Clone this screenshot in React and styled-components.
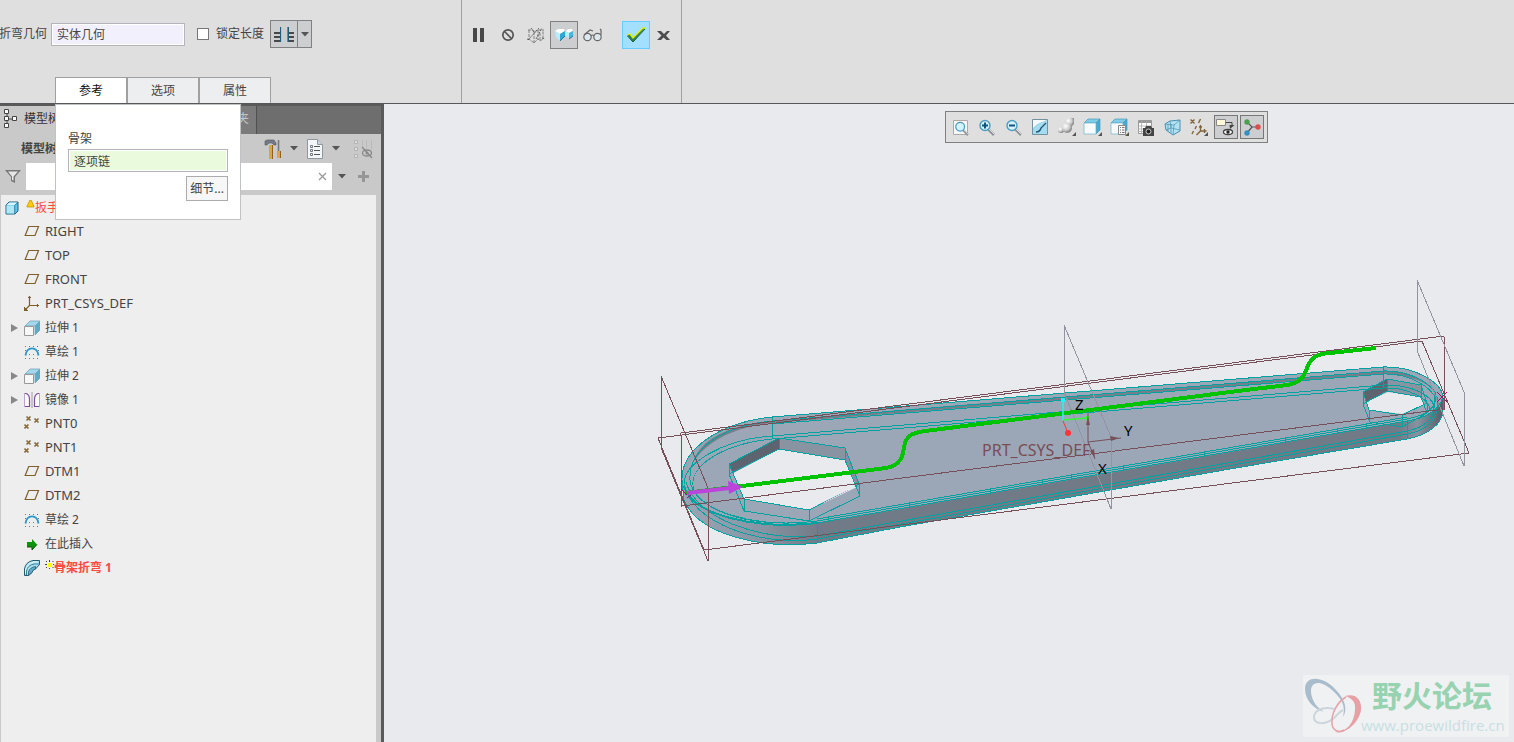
import React from 'react';
import styled, { createGlobalStyle, css } from 'styled-components';

const GlobalStyle = createGlobalStyle`
  *, *::before, *::after {
    box-sizing: border-box;
  }

  body {
    margin: 0;
    overflow-x: hidden;
    font-family: 'Noto Sans', 'Noto Sans CJK SC', sans-serif;
    font-size: 12px;
    line-height: 16px;
    color: #444;
    background: #e9eaee;
  }

  button, input {
    font: inherit;
    color: inherit;
    margin: 0;
    padding: 0;
  }

  svg {
    display: block;
    flex: none;
  }
`;

const Page = styled.div`
  display: flex;
  flex-direction: column;
  min-height: 100vh;
`;

/* ---------- ribbon ---------- */

const Ribbon = styled.header`
  display: flex;
  min-height: 104px;
  background: #dfdfdf;
  border-bottom: 1px solid #58585c;
`;

const Settings = styled.section`
  display: flex;
  flex-direction: column;
  justify-content: space-between;
  width: 462px;
  padding-top: 20px;
  border-right: 1px solid #a0a0a0;
`;

const SettingsRow = styled.div`
  display: flex;
  align-items: center;
`;

const FieldLabel = styled.label`
  white-space: nowrap;
`;

const Collector = styled.input`
  width: ${(props) => props.$width};
  height: 23px;
  padding: 0 5px;
  border: 1px solid #b4b4ba;
  background: ${(props) => props.$fill};
  box-shadow: inset 0 0 0 1px #fff;
  outline: none;
`;

const GeometryField = styled.div`
  display: flex;
  align-items: center;
  gap: 4px;
  margin-left: -1px;
`;

const CheckField = styled.div`
  display: flex;
  align-items: center;
  gap: 7px;
  margin: 0 6px 0 12px;
`;

const Check = styled.input`
  appearance: none;
  width: 12px;
  height: 12px;
  border: 1px solid #777;
  background: #fff;

  &:checked {
    background: #777;
  }
`;

const SplitButton = styled.div`
  display: flex;
  height: 28px;
  border: 1px solid #808080;
  background: #cdced0;
`;

const SplitPart = styled.button`
  display: flex;
  align-items: center;
  justify-content: center;
  width: ${(props) => (props.$narrow ? '14px' : '26px')};
  border: 0;
  border-left: ${(props) => (props.$narrow ? '1px solid #808080' : '0')};
  background: none;
`;

const TabBar = styled.nav`
  position: relative;
  display: flex;
  margin-left: 55px;
`;

const RibbonTab = styled.button`
  width: 72px;
  height: 26px;
  border: 1px solid #a0a0a0;
  border-bottom: 0;
  background: ${(props) => (props.$active ? '#fff' : '#edeef0')};
  color: ${(props) => (props.$active ? '#111' : '#444')};
`;

const Popup = styled.div`
  position: absolute;
  z-index: 2;
  top: 100%;
  left: 0;
  display: flex;
  flex-direction: column;
  align-items: flex-start;
  width: 186px;
  margin-top: 1px;
  padding: 26px 12px 18px;
  border: 1px solid #c0c3c6;
  background: #fff;
`;

const PopupLabel = styled.label`
  margin-bottom: 2px;
`;

const DetailsButton = styled.button`
  align-self: flex-end;
  height: 25px;
  margin-top: 4px;
  padding: 0 3px;
  border: 1px solid #acacac;
  background: #f7f7f7;
`;

const Controls = styled.section`
  display: flex;
  align-items: flex-start;
  width: 220px;
  padding: 21px 0 0 4px;
  border-right: 1px solid #a0a0a0;
`;

const ControlGroup = styled.div`
  display: flex;
  margin-right: 16px;
`;

const ControlButton = styled.button`
  display: flex;
  align-items: center;
  justify-content: center;
  width: 28px;
  height: 28px;
  border: 1px solid transparent;
  background: none;

  ${(props) => props.$pressed && css`
    border-color: #808080;
    background: #cdced0;
  `}

  ${(props) => props.$accept && css`
    border-color: #66ccff;
    background: #a3dfff;
  `}
`;

/* ---------- navigator ---------- */

const Workspace = styled.div`
  display: flex;
  flex: 1;
`;

const Navigator = styled.aside`
  display: flex;
  flex-direction: column;
  width: 384px;
  padding-top: 2px;
  border-right: 3px solid #5a5a5a;
  background: linear-gradient(#5a5a5a 2px, #c9c9c9 2px);
`;

const NavTabs = styled.div`
  display: flex;
  height: 28px;
  background: #6e6e6e;
`;

const NavTab = styled.button`
  display: flex;
  align-items: center;
  justify-content: ${(props) => (props.$active ? 'flex-start' : 'flex-end')};
  gap: 6px;
  width: ${(props) => (props.$active ? '110px' : '147px')};
  padding: 0 7px 2px 4px;
  border: 0;
  border-right: 1px solid #505050;
  background: ${(props) => (props.$active ? '#c9c9c9' : '#7b7b7b')};
  color: ${(props) => (props.$active ? '#333' : '#c4c4c4')};
`;

const NavTitle = styled.div`
  display: flex;
  align-items: center;
  height: 29px;
  padding: 0 7px 0 21px;
`;

const NavHeading = styled.h2`
  flex: 1;
  margin: 0;
  font-size: 12px;
  font-weight: 600;
`;

const NavTools = styled.div`
  display: flex;
  margin-right: 6px;
`;

const IconButton = styled.button`
  display: flex;
  align-items: center;
  justify-content: center;
  width: ${(props) => (props.$small ? '20px' : '22px')};
  height: 22px;
  border: 0;
  background: none;
`;

const FilterRow = styled.div`
  display: flex;
  align-items: center;
  height: 27px;
  margin-bottom: 5px;
  padding: 0 7px 0 5px;
`;

const FilterBox = styled.div`
  display: flex;
  align-items: center;
  flex: 1;
  height: 27px;
  margin-left: 5px;
  background: #fff;
`;

const FilterInput = styled.input`
  flex: 1;
  min-width: 0;
  height: 27px;
  padding: 0 6px;
  border: 0;
  background: none;
  outline: none;
`;

const Tree = styled.ul`
  flex: 1;
  margin: 0 5px 0 1px;
  padding: 0;
  list-style: none;
  background: #eee;
`;

const TreeRow = styled.li`
  display: flex;
  align-items: center;
  height: 24px;
  padding-top: ${(props) => (props.$latin ? '0' : '2px')};
  padding-left: ${(props) => (props.$root ? '4px' : '9px')};
  white-space: nowrap;
`;

const Expander = styled.span`
  display: flex;
  width: 14px;
`;

const TreeIcon = styled.span`
  display: flex;
  width: ${(props) => (props.$root ? '21px' : '21px')};
`;

const TreeLabel = styled.span`
  font-size: ${(props) => (props.$latin ? '13px' : '12px')};
  font-weight: ${(props) => (props.$bold ? 700 : 400)};
  color: ${(props) => (props.$failed ? '#ff4a40' : '#444')};
`;

/* ---------- graphics area ---------- */

const Graphics = styled.main`
  position: relative;
  flex: 1;
  min-width: 0;
  background: #e9eaee;
`;

const Scene = styled.svg`
  width: 100%;
  height: auto;
`;

const SceneText = styled.text`
  font-family: 'Noto Sans', sans-serif;
  font-size: ${(props) => (props.$axis ? '15px' : '16px')};
  fill: ${(props) => (props.$axis ? '#000' : '#7a4c54')};
`;

const ViewToolbar = styled.div`
  position: absolute;
  top: 7px;
  right: 246px;
  display: flex;
  align-items: center;
  justify-content: space-between;
  width: 323px;
  height: 32px;
  padding: 0 3px;
  border: 1px solid #808080;
  background: #dfdfdf;
`;

const ViewButton = styled.button`
  display: flex;
  align-items: center;
  justify-content: center;
  width: 24px;
  height: 24px;
  border: 1px solid ${(props) => (props.$pressed ? '#777' : 'transparent')};
  background: ${(props) => (props.$pressed ? '#cdced0' : 'none')};
`;

const Watermark = styled.div`
  position: absolute;
  right: 5px;
  bottom: 5px;
  display: flex;
  width: 206px;
  height: 62px;
  background: #f0f1f3;
`;

const WatermarkText = styled.div`
  display: flex;
  flex-direction: column;
  gap: 2px;
  margin-left: -4px;
`;

const WatermarkName = styled.span`
  padding-left: 11px;
  font-family: 'Noto Sans CJK SC', sans-serif;
  font-size: 30px;
  font-weight: 700;
  line-height: 38px;
  color: #97d3b0;
`;

const WatermarkUrl = styled.span`
  font-family: 'Open Sans', sans-serif;
  font-size: 15px;
  line-height: 20px;
  color: #c6e0e2;
`;

/* ---------- icons ---------- */

const Icon = ({ size = 16, width, height, children }) => (
  <svg width={width || size} height={height || size} viewBox={`0 0 ${width || size} ${height || size}`} fill="none" aria-hidden="true">
    {children}
  </svg>
);

const Caret = () => (
  <Icon width={8} height={5}>
    <path d="M0 0h8L4 4.6z" fill="#555" />
  </Icon>
);

const LengthIcon = () => (
  <Icon width={20} height={18}>
    <path d="M7.500 2v15" stroke="#86d4f5" strokeWidth="1" />
    <path d="M6.500 2v15" stroke="#1f5d7c" />
    <path d="M14.500 2v15" stroke="#1f5d7c" strokeWidth="1" />
    <path d="M13.500 2v15" stroke="#2f9fd0" />
    <path d="M0 8h6M0 12h6M0 16h6M15 8h5M15 12h5M15 16h5" stroke="#484848" strokeWidth="2" />
  </Icon>
);

const PauseIcon = () => (
  <Icon>
    <path d="M1 1h4v14H1zM8 1h4v14H8z" fill="#484848" />
  </Icon>
);

const BlockedIcon = () => (
  <Icon>
    <circle cx="8" cy="8" r="5.200" stroke="#555" strokeWidth="1.700" />
    <path d="M4.300 4.300l7.400 7.400" stroke="#555" strokeWidth="1.600" />
  </Icon>
);

const WireIcon = () => (
  <Icon width={20} height={18}>
    <path d="M2 4h5l1 2 4-2h6M3 4v9l5 4 4-4 2 2 3-2V4M8 6v11M12 4v9M14 7v8" stroke="#777" strokeWidth="0.900" strokeDasharray="3 1" />
    <path d="M2 14L13 2M5 2l3 4M10 13l6-11M16 12l3 1M1 13l3 1" stroke="#555" strokeWidth="0.900" strokeDasharray="2 1" />
  </Icon>
);

const PreviewIcon = () => (
  <Icon width={18} height={14}>
    <path d="M0 3l3-2h6l1 2-5 3zM11 3l2-2h4l1 2-4 2z" fill="#fff" />
    <path d="M0 3l5 3v7L1 9z" fill="#b9ebfb" />
    <path d="M5 6l5-3v5l-5 5z" fill="#2ba7d9" />
    <path d="M10 3l4 2v6l-3-3z" fill="#b9ebfb" />
    <path d="M14 5l4-2v5l-4 3z" fill="#42b8e3" />
    <path d="M5 13l5-5M14 11l4-3" stroke="#27779c" />
  </Icon>
);

const GlassesIcon = () => (
  <Icon width={20} height={14}>
    <circle cx="5.500" cy="9" r="3.700" fill="#dce8f0" stroke="#666" strokeWidth="1.200" />
    <circle cx="15.500" cy="9" r="3.700" fill="#dce8f0" stroke="#666" strokeWidth="1.200" />
    <path d="M9 8q1.500-2 3 0M2 7l6-5 3 1M19 7V2l-1-1" stroke="#666" strokeWidth="1.200" />
  </Icon>
);

const AcceptIcon = () => (
  <Icon width={20} height={16}>
    <path d="M1 8l3-1 3 4L17 1h2L7 15z" fill="#2c8455" />
    <path d="M1 8l3-1 3 4L17 1h2" stroke="#e2ec00" strokeWidth="1.300" />
    <path d="M1.500 9L7 15 19 2" stroke="#195c3a" />
  </Icon>
);

const CancelIcon = () => (
  <Icon width={14} height={12}>
    <path d="M0 2h4l3 3 3-3h3L9 6.500l4 4.500H9.500L6.500 8.500 4 11H0l4.500-4.500z" fill="#4c4c4c" />
  </Icon>
);

const ModelTreeIcon = () => (
  <Icon width={14} height={20}>
    <path d="M3 4v12M3 10h8" stroke="#444" strokeWidth="1" />
    <path d="M.5.5h4v4h-4zM.5 7.500h4v4h-4zM.5 14.500h4v4h-4zM8.500 7.500h4v4h-4z" fill="#fff" stroke="#444" />
  </Icon>
);

const ToolsIcon = () => (
  <Icon width={18} height={20}>
    <path d="M1 2l2-1h7l2 3v2h-2L8 4H5L3 6H1z" fill="#747a86" stroke="#555" strokeWidth="0.600" />
    <path d="M5 6h4v14H5z" fill="#dea347" />
    <path d="M8 6h1v14H8z" fill="#8c6021" />
    <path d="M14.500 1v11" stroke="#777" strokeWidth="1.600" />
    <path d="M13 12h4v7h-4z" fill="#dea347" />
    <path d="M16 12h1v7h-1z" fill="#8c6021" />
  </Icon>
);

const ListIcon = () => (
  <Icon width={16} height={20}>
    <path d="M.5.5h10l5 5v14H.5z" fill="#f3f7f9" stroke="#8f979d" />
    <path d="M10.500.5v5h5" fill="#cad4da" stroke="#8f979d" />
    <path d="M7 7.500h6M7 11.500h6M7 15.500h6" stroke="#555" />
    <path d="M3.500 6.500h2v2h-2zM3.500 10.500h2v2h-2zM3.500 14.500h2v2h-2z" stroke="#777" />
  </Icon>
);

const HiddenTreeIcon = () => (
  <Icon width={20} height={20}>
    <path d="M1.500 1.500h3v3h-3zM1.500 8.500h3v3h-3zM1.500 15.500h3v3h-3z" fill="#ddd" stroke="#b2b2b2" />
    <path d="M9.500 1v8M13.500 1v8M18.500 1v10" stroke="#bbb" />
    <ellipse cx="14" cy="14" rx="4.500" ry="3" stroke="#888" strokeWidth="1.300" />
    <circle cx="14" cy="14" r="1.500" fill="#888" />
    <path d="M9 8l10 11" stroke="#888" strokeWidth="1.300" />
  </Icon>
);

const FilterIcon = () => (
  <Icon>
    <path d="M0 1h16L10 8v6l-4-2V8z" fill="#777" />
    <path d="M3 2.500h10L8.500 7.500v4L7 11V7.500z" fill="#e6e6e6" />
  </Icon>
);

const ClearIcon = () => (
  <Icon size={9}>
    <path d="M1 1l7 7M8 1L1 8" stroke="#999" strokeWidth="1.300" />
  </Icon>
);

const PlusIcon = () => (
  <Icon size={11}>
    <path d="M4 0h3v4h4v3H7v4H4V7H0V4h4z" fill="#969696" />
  </Icon>
);

const PartIcon = () => (
  <Icon width={14} height={14}>
    <path d="M1 4l3-3h9v9l-3 3H1z" fill="#5cc3ea" stroke="#26607a" />
    <path d="M1.500 4.500h8v8h-8z" fill="#aee7fa" />
    <path d="M1.500 4l3-2.500h8L9.500 4z" fill="#d8f5ff" />
    <path d="M9.700 4.500v8M9.700 4.500l3-3" stroke="#26607a" strokeWidth="0.700" />
  </Icon>
);

const WarningIcon = () => (
  <Icon width={9} height={16}>
    <path d="M4 0h1l3 6v1H1V6z" fill="#ffce00" stroke="#b78a00" strokeWidth="0.700" />
  </Icon>
);

const PlaneIcon = () => (
  <Icon>
    <path d="M4.700 3.500h9.800l-3.500 9H1.200z" stroke="#7d5f2c" strokeWidth="1.200" />
  </Icon>
);

const CsysIcon = () => (
  <Icon>
    <path d="M5.500 1v9.500H15M5.500 10.500L1 15" stroke="#7d5f2c" strokeWidth="1.200" />
    <path d="M4 2.500h3M13.500 9v3M0 12v4h4z" stroke="#7d5f2c" />
    <path d="M0 12v4h4z" fill="#7d5f2c" />
  </Icon>
);

const ExtrudeIcon = () => (
  <Icon>
    <path d="M1 6l5-5h10l-5 5z" fill="#a5d7ec" stroke="#71a7bd" strokeWidth="0.800" />
    <path d="M11 6l5-5v9l-5 5z" fill="#5cabc9" stroke="#71a7bd" strokeWidth="0.800" />
    <path d="M.5 6.500h9v9h-9z" fill="#f7f7f7" stroke="#999" />
  </Icon>
);

const SketchIcon = () => (
  <Icon>
    <path d="M1 2.500h14M1 14.500h14M1 6.500h1M14 6.500h1M5 10.500h1M9 10.500h1" stroke="#777" strokeDasharray="1 3" />
    <path d="M1.500 11.500C3 2 13 2 14.500 11.500" stroke="#2c98c6" strokeWidth="1.800" />
  </Icon>
);

const MirrorIcon = () => (
  <Icon>
    <path d="M.5 1.500h1q4 1.500 4 6v7h-5zM15.500 1.500h-1q-4 1.500-4 6v7h5z" fill="#fbfbfb" />
    <path d="M.5 1v14M15.500 1v14" stroke="#b9a3c9" />
    <path d="M1 1.500h1q3.500 1 3.500 6v7H1M15 1.500h-1q-3.500 1-3.500 6v7H15" stroke="#7d4f9d" strokeWidth="1.200" />
    <path d="M8 0v16" stroke="#888" strokeWidth="0.800" />
  </Icon>
);

const PointsIcon = () => (
  <Icon>
    <path d="M2.500 1.500l4 4M6.500 1.500l-4 4M10.500 3.500l4 4M14.500 3.500l-4 4M.5 9.500l4 4M4.500 9.500l-4 4" stroke="#84693b" strokeWidth="1.600" />
  </Icon>
);

const InsertIcon = () => (
  <Icon>
    <path d="M3 6h5V3l5 5.500L8 14v-3H3z" fill="#0c950c" />
    <path d="M3 11h5v3l5-5.500" stroke="#124f12" />
  </Icon>
);

const BendIcon = () => (
  <Icon>
    <path d="M.5 15.500V9Q1.500 2 9 .5h6.500v4L11.500 9q-3 0-3.500 3.500l-3.500 3z" fill="#a9dff0" stroke="#245b70" />
    <path d="M4.500 15.500V12q1-4.500 7-5.500V9q-3 .5-3.500 3.500z" fill="#5cb0cd" stroke="#245b70" strokeWidth="0.800" />
    <path d="M2.500 15v-4q1-6 8-7h5" stroke="#2e7690" strokeWidth="0.900" />
    <path d="M1.500 13v-3q1.500-6 8-8h4" stroke="#e4f8fd" />
  </Icon>
);

const NewMark = () => (
  <Icon width={9} height={16}>
    <path d="M3 3h4v4H3z" fill="#ffff00" />
    <path d="M4.500 0v2M4.500 8v1M0 4.500h2M8 4.500h1M1.500 1v1M8 1v1M1.500 7v1M8 7v1" stroke="#444" />
  </Icon>
);

const Lens = ({ sign }) => (
  <>
    <path d="M10 10l6 6" stroke="#8c9297" strokeWidth="2.600" />
    <path d="M10.500 9.500l6 6" stroke="#ddd" />
    <circle cx="7" cy="6.500" r="5" fill="#d6f2fc" stroke="#4b9ec2" strokeWidth="1.400" />
    {sign && <path d={sign} stroke="#0b5685" strokeWidth="2" />}
  </>
);

const RefitIcon = () => (
  <Icon width={18} height={17}>
    <path d="M1.500 1.500h14v14h-14z" fill="#f7f7f7" stroke="#aaa" />
    <g transform="translate(2 2) scale(.88)"><Lens /></g>
  </Icon>
);

const ZoomInIcon = () => <Icon width={18} height={17}><Lens sign="M4 6.500h6M7 3.500v6" /></Icon>;

const ZoomOutIcon = () => <Icon width={18} height={17}><Lens sign="M4 6.500h6" /></Icon>;

const RepaintIcon = () => (
  <Icon width={17} height={16}>
    <path d="M.5.5h15v15H.5z" fill="#5fb4d4" stroke="#74929e" />
    <path d="M1 11C3 5 9 4 15 1v14H1z" fill="#a6dcef" />
    <path d="M1 1h14C9 4 3 5 1 10z" fill="#f4fafc" />
    <path d="M4 13q4 0 5-4l5-5" stroke="#215a76" strokeWidth="1.400" />
  </Icon>
);

const Corner = () => <path d="M19 14v4h-4z" fill="#555" />;

const ShadingIcon = () => (
  <Icon width={20} height={18}>
    <defs>
      <radialGradient id="ball" cx=".35" cy=".3" r=".75">
        <stop offset="0" stopColor="#fff" />
        <stop offset=".5" stopColor="#d4d4d4" />
        <stop offset="1" stopColor="#777" />
      </radialGradient>
    </defs>
    <path d="M8 3l3-3h6v6l-3 3H8z" fill="url(#ball)" />
    <circle cx="4" cy="12" r="3" fill="url(#ball)" />
    <circle cx="10" cy="10" r="5" fill="url(#ball)" />
    <Corner />
  </Icon>
);

const Cube = () => (
  <>
    <path d="M1 5l4-4h12l-4 4z" fill="#7fcce6" stroke="#4898b7" strokeWidth="0.700" />
    <path d="M13 5l4-4v11l-4 4z" fill="#49a9ce" stroke="#4898b7" strokeWidth="0.700" />
    <path d="M1 5h12v11H1z" fill="#f8fbfc" stroke="#6ab4ce" strokeWidth="0.700" />
  </>
);

const OrientIcon = () => <Icon width={20} height={18}><Cube /><Corner /></Icon>;

const SavedViewsIcon = () => (
  <Icon width={20} height={18}>
    <Cube />
    <path d="M8.500 7.500h7v9h-7z" fill="#fafafa" stroke="#888" />
    <path d="M10 9.500h1M12 9.500h2.500M10 12h1M12 12h2.500M10 14.500h1M12 14.500h2.500" stroke="#777" />
    <Corner />
  </Icon>
);

const ViewManagerIcon = () => (
  <Icon width={18} height={17}>
    <path d="M1.500 1.500h13v13h-13z" fill="#fff" stroke="#999" />
    <path d="M1 2h14v2H1z" fill="#999" />
    <path d="M4.500 2v13M9.500 2v13M1 7h14M1 10h14M1 12.500h14" stroke="#aaa" strokeWidth="0.800" />
    <path d="M6 9h2l1-2h5l1 2h2v8H6z" fill="#444" />
    <circle cx="11.500" cy="12.500" r="2.500" fill="#222" stroke="#ccc" />
  </Icon>
);

const PerspectiveIcon = () => (
  <Icon width={18} height={17}>
    <path d="M1 5l5-3 10-1v11l-7 4-7-5z" fill="#b2e1f2" stroke="#4b91ae" />
    <path d="M1 5l9 1-1 10M10 6l6-5M2 11l5-2 9 2M6 2l1 7M4 5v7M7 5v9" stroke="#4b91ae" strokeWidth="0.700" />
  </Icon>
);

const DatumIcon = () => (
  <Icon width={20} height={18}>
    <path d="M1.500 1.500l4 4M5.500 1.500l-4 4M11.500 1l-2 4M7.500 8l-1.500 3M4.500 13L3 16M11.500 7v6h6M11.500 13l-4 4M10 9h3M15.500 11v4" stroke="#80643a" strokeWidth="1.400" />
    <path d="M19 14v4h-4z" fill="#555" />
  </Icon>
);

const AnnotationIcon = () => (
  <Icon width={20} height={18}>
    <path d="M.5 1.500h9v6h-9z" fill="#fff9dc" stroke="#888" />
    <path d="M10 4.500h6V7" stroke="#444" />
    <path d="M13.500 7h5L14 11z" fill="#444" />
    <ellipse cx="12" cy="14" rx="4.500" ry="2.500" fill="#fff" stroke="#444" strokeWidth="1.300" />
    <circle cx="12" cy="14" r="1.700" fill="#222" />
  </Icon>
);

const SpinIcon = () => (
  <Icon width={18} height={18}>
    <path d="M4 4l5 5 6 0M9 9l-5 6" stroke="#555" strokeWidth="1.200" />
    <circle cx="4" cy="4" r="2.700" fill="#4c9e4f" />
    <circle cx="15" cy="9" r="2.700" fill="#d94f4f" />
    <circle cx="4" cy="15" r="2.700" fill="#338fc0" />
  </Icon>
);

const LogoMark = () => (
  <Icon width={62} height={62}>
    <path fillRule="evenodd" fill="#a9bccb" d="M2 14C2 0 20 1 32 14c10 10 13 20 8 28 3-12-2-19-11-27C18 5 8 6 8 16c0 9 6 17 13 21C10 34 2 24 2 14z" />
    <path d="M31 34c-9-3-20 1-20 8 0 8 12 8 20 1 4-4 5-6 9-8" stroke="#ccd5dc" strokeWidth="2" />
    <path fill="#e6a0a6" d="M42 21c11-3 17 4 16 14-2 13-16 25-26 22 12 0 19-9 20-22 1-8-3-12-10-14z" />
    <path d="M43 22c-9 5-15 17-14 27 1 7 7 9 12 6" stroke="#e6a0a6" strokeWidth="1.500" />
  </Icon>
);

/* ---------- model tree data ---------- */

const features = [
  { name: 'RIGHT', icon: PlaneIcon, latin: true },
  { name: 'TOP', icon: PlaneIcon, latin: true },
  { name: 'FRONT', icon: PlaneIcon, latin: true },
  { name: 'PRT_CSYS_DEF', icon: CsysIcon, latin: true },
  { name: '拉伸 1', icon: ExtrudeIcon, group: true },
  { name: '草绘 1', icon: SketchIcon },
  { name: '拉伸 2', icon: ExtrudeIcon, group: true },
  { name: '镜像 1', icon: MirrorIcon, group: true },
  { name: 'PNT0', icon: PointsIcon, latin: true },
  { name: 'PNT1', icon: PointsIcon, latin: true },
  { name: 'DTM1', icon: PlaneIcon, latin: true },
  { name: 'DTM2', icon: PlaneIcon, latin: true },
  { name: '草绘 2', icon: SketchIcon },
  { name: '在此插入', icon: InsertIcon },
  { name: '骨架折弯 1', icon: BendIcon, failed: true },
];

const viewTools = [
  { name: 'refit', icon: RefitIcon },
  { name: 'zoom in', icon: ZoomInIcon },
  { name: 'zoom out', icon: ZoomOutIcon },
  { name: 'repaint', icon: RepaintIcon },
  { name: 'display style', icon: ShadingIcon },
  { name: 'orientation', icon: OrientIcon },
  { name: 'saved views', icon: SavedViewsIcon },
  { name: 'view manager', icon: ViewManagerIcon },
  { name: 'perspective', icon: PerspectiveIcon },
  { name: 'datum display', icon: DatumIcon },
  { name: 'annotations', icon: AnnotationIcon, pressed: true },
  { name: 'spin center', icon: SpinIcon, pressed: true },
];

function Feature({ feature }) {
  const FeatureIcon = feature.icon;
  return (
    <TreeRow $latin={feature.latin}>
      <Expander>
        {feature.group && (
          <Icon width={9} height={10}>
            <path d="M1 1l7 4-7 4z" fill="#888" />
          </Icon>
        )}
      </Expander>
      <TreeIcon><FeatureIcon /></TreeIcon>
      {feature.failed && <NewMark />}
      <TreeLabel $latin={feature.latin} $failed={feature.failed} $bold={feature.failed}>
        {feature.name}
      </TreeLabel>
    </TreeRow>
  );
}

function Wrench() {
  return (
    <Scene viewBox="384 104 1130 638" preserveAspectRatio="xMinYMin meet" fill="none" role="img" aria-label="PRT_CSYS_DEF">
      <defs>
        <linearGradient id="side" gradientUnits="userSpaceOnUse" x1="684" y1="0" x2="1444" y2="0">
          <stop offset="0" stopColor="#98a5b5" />
          <stop offset=".1" stopColor="#8895a4" />
          <stop offset=".18" stopColor="#717b87" />
          <stop offset=".94" stopColor="#717b87" />
          <stop offset=".965" stopColor="#8792a0" />
          <stop offset="1" stopColor="#555b66" />
        </linearGradient>
      </defs>

      {/* solid body */}
      <path
        fill="url(#side)"
        d="M772 417L1383 367C1415 366 1443 383 1443 398V410C1443 424 1428 435 1407 439L1230 469 900 527 817 543C760 550 698 534 684 500L682 480C681 448 722 422 772 417z"
      />
      <path
        fill="#9ba7b7"
        d="M772 417L1383 367C1415 366 1443 383 1443 396 1441 408 1428 418 1407 421L1230 452 900 509 817 523C765 530 702 521 687 488 678 452 722 422 772 417z"
      />
      <path fill="#747f8b" d="M772 421L900 410 1383 371C1405 370 1426 379 1434 390 1422 379 1402 374 1383 374L900 413 772 423C735 427 706 441 693 463 700 437 735 424 772 421z" />

      {/* openings */}
      <path fill="#e9eaee" d="M733 473L779 449 845 460 857 487 809 510 744 499z" />
      <path fill="#5d646f" d="M729 464L779 438V449L733 473z" />
      <path fill="#8994a3" d="M779 438L845 448V460L779 449z" />
      <path fill="#8490a0" d="M845 448L859 484 857 487 845 460z" />
      <path fill="#e9eaee" d="M1366 402L1388 392 1421 397 1424 405 1402 414 1369 410z" />
      <path fill="#5d646f" d="M1363 392L1387 379V391L1366 402z" />
      <path fill="#8994a3" d="M1387 379L1421 385V397L1387 391z" />

      <g stroke="#00a3a0" shapeRendering="crispEdges">
        <path d="M772 417L1383 367C1415 366 1443 383 1443 398V410C1443 424 1428 435 1407 439L1230 469 900 527 817 543C760 550 698 534 684 500L682 480C681 448 722 422 772 417z" />
        <path d="M772 421L1383 371C1412 370 1437 387 1436 397M772 424L1383 374C1410 373 1433 388 1436 400" />
        <path d="M772 421C722 426 688 449 690 480 693 511 755 529 817 521L1407 419C1427 415 1436 407 1436 397" />
        <path d="M817 523L1407 421C1428 418 1441 408 1443 396" />
        <path d="M684 486C692 515 755 530 817 523" strokeWidth="2" />
        <path d="M817 519L1407 417M817 539L1407 434C1425 431 1436 421 1437 409V397M817 536L1407 431C1424 428 1434 418 1434 408V397" />
        <path d="M684 485C692 522 758 547 817 539M686 482C696 518 758 541 817 536" />
        <path d="M772 436L1383 385C1411 384 1434 396 1434 408M772 439L1383 388C1405 387 1428 397 1430 409" />
        <path d="M772 436C722 439 680 466 685 484M772 439C722 444 686 467 694 490 703 509 740 524 790 523" />
        <path d="M772 417V439M817 523V543M1383 367V388M1407 421V439" />
        <path d="M729 464L779 438 845 448 859 484 809 510 744 499zM729 474L779 449 845 460 860 496 809 521 744 511zM729 464V474M779 438V449M845 448V460M859 484V496M809 510V521M744 499V511" />
        <path d="M1363 392L1387 379 1421 385 1427 403 1402 415 1369 410zM1363 404L1387 391 1421 397 1427 413 1402 427 1370 422zM1363 392V404M1387 379V391M1421 385V397M1427 403V413M1402 415V427M1369 410V422" />
      </g>
      {/* clears hidden edges out of the openings */}
      <path fill="#e9eaee" d="M735 473L779 450 844 461 855 487 809 509 745 498z" />
      <path fill="#e9eaee" d="M1368 402L1388 393 1420 398 1422 404 1402 413 1370 409z" />

      {/* datum planes */}
      <g stroke="#765058" shapeRendering="crispEdges">
        <path d="M661 376L708 488V561L662 450z" />
        <path d="M658 438L1422 341 1469 453 704 550z" />
        <path d="M681 433L1444 336 1445 409 682 506z" />
      </g>
      <g stroke="#9295a0" shapeRendering="crispEdges">
        <path d="M1064 325L1111 437V509L1064 392z" />
        <path d="M1417 280L1464 392V466L1418 353z" />
      </g>

      {/* bend spine */}
      <path
        stroke="#00c400"
        strokeWidth="4"
        shapeRendering="crispEdges"
        d="M685 493L742 486 886 468C901 465 903 456 904 447 906 436 911 433 925 431L1090 410 1230 392 1287 385C1300 383 1304 377 1307 368 1311 357 1317 354 1330 353L1376 348"
      />
      <path d="M687 493L730 488" stroke="#bb44dc" strokeWidth="4" />
      <path d="M728 481L743 487 729 494z" fill="#bb44dc" />
      <path d="M1437 392l10 10M1447 392l-10 10M681 489l6 6M687 498l4-3" stroke="#b00068" />

      {/* spin centre and csys */}
      <path d="M1063 400V420" stroke="#22f2fa" strokeWidth="1.500" />
      <path d="M1061 398h4v4h-4z" fill="#22f2fa" />
      <path d="M1063 420L1087 418" stroke="#35f535" strokeWidth="1.500" />
      <path d="M1086 416h4v4h-4z" fill="#35f535" />
      <path d="M1063 421L1068 433" stroke="#ff3434" />
      <circle cx="1068" cy="433" r="3" fill="#ff3434" />
      <path d="M1088 413V442M1088 442L1121 438M1088 442L1095 459" stroke="#765058" />
      <path d="M1088 417l2 8h-4zM1119 438l-9-2 1 5zM1095 458l-5-7 4-2z" fill="#765058" />
      <SceneText x="982" y="456">PRT_CSYS_DEF</SceneText>
      <SceneText $axis x="1075" y="410">Z</SceneText>
      <SceneText $axis x="1124" y="436">Y</SceneText>
      <SceneText $axis x="1098" y="474">X</SceneText>
    </Scene>
  );
}

function App() {
  return (
    <Page>
      <GlobalStyle />
      <Ribbon>
        <Settings>
          <SettingsRow>
            <GeometryField>
              <FieldLabel htmlFor="geometry">折弯几何</FieldLabel>
              <Collector id="geometry" $width="134px" $fill="#f3f0fd" defaultValue="实体几何" />
            </GeometryField>
            <CheckField>
              <Check type="checkbox" id="lock" />
              <FieldLabel htmlFor="lock">锁定长度</FieldLabel>
            </CheckField>
            <SplitButton>
              <SplitPart aria-label="length type"><LengthIcon /></SplitPart>
              <SplitPart $narrow aria-label="more length types"><Caret /></SplitPart>
            </SplitButton>
          </SettingsRow>
          <TabBar>
            <RibbonTab $active>参考</RibbonTab>
            <RibbonTab>选项</RibbonTab>
            <RibbonTab>属性</RibbonTab>
            <Popup>
              <PopupLabel htmlFor="spine">骨架</PopupLabel>
              <Collector id="spine" $width="100%" $fill="#e9fbdc" defaultValue="逐项链" />
              <DetailsButton>细节...</DetailsButton>
            </Popup>
          </TabBar>
        </Settings>
        <Controls>
          <ControlGroup>
            <ControlButton aria-label="pause"><PauseIcon /></ControlButton>
            <ControlButton aria-label="no preview"><BlockedIcon /></ControlButton>
            <ControlButton aria-label="wireframe preview"><WireIcon /></ControlButton>
            <ControlButton $pressed aria-label="attached preview"><PreviewIcon /></ControlButton>
            <ControlButton aria-label="verify"><GlassesIcon /></ControlButton>
          </ControlGroup>
          <ControlButton $accept aria-label="accept"><AcceptIcon /></ControlButton>
          <ControlButton aria-label="cancel"><CancelIcon /></ControlButton>
        </Controls>
      </Ribbon>

      <Workspace>
        <Navigator>
          <NavTabs>
            <NavTab $active>
              <ModelTreeIcon />
              模型树
            </NavTab>
            <NavTab>收藏夹</NavTab>
          </NavTabs>
          <NavTitle>
            <NavHeading>模型树</NavHeading>
            <NavTools>
              <IconButton aria-label="tools"><ToolsIcon /></IconButton>
              <IconButton $small aria-label="tools menu"><Caret /></IconButton>
              <IconButton aria-label="show"><ListIcon /></IconButton>
              <IconButton $small aria-label="show menu"><Caret /></IconButton>
            </NavTools>
            <IconButton aria-label="tree columns"><HiddenTreeIcon /></IconButton>
          </NavTitle>
          <FilterRow>
            <FilterIcon />
            <FilterBox>
              <FilterInput aria-label="filter" />
              <IconButton $small aria-label="clear"><ClearIcon /></IconButton>
            </FilterBox>
            <IconButton $small aria-label="filter menu"><Caret /></IconButton>
            <IconButton aria-label="add"><PlusIcon /></IconButton>
          </FilterRow>
          <Tree>
            <TreeRow $root>
              <TreeIcon $root><PartIcon /></TreeIcon>
              <WarningIcon />
              <TreeLabel $failed>扳手.PRT</TreeLabel>
            </TreeRow>
            {features.map((feature) => (
              <Feature key={feature.name} feature={feature} />
            ))}
          </Tree>
        </Navigator>

        <Graphics>
          <Wrench />
          <ViewToolbar>
            {viewTools.map(({ name, icon: ToolIcon, pressed }) => (
              <ViewButton key={name} $pressed={pressed} aria-label={name}>
                <ToolIcon />
              </ViewButton>
            ))}
          </ViewToolbar>
          <Watermark>
            <LogoMark />
            <WatermarkText>
              <WatermarkName>野火论坛</WatermarkName>
              <WatermarkUrl>www.proewildfire.cn</WatermarkUrl>
            </WatermarkText>
          </Watermark>
        </Graphics>
      </Workspace>
    </Page>
  );
}

export default App;
